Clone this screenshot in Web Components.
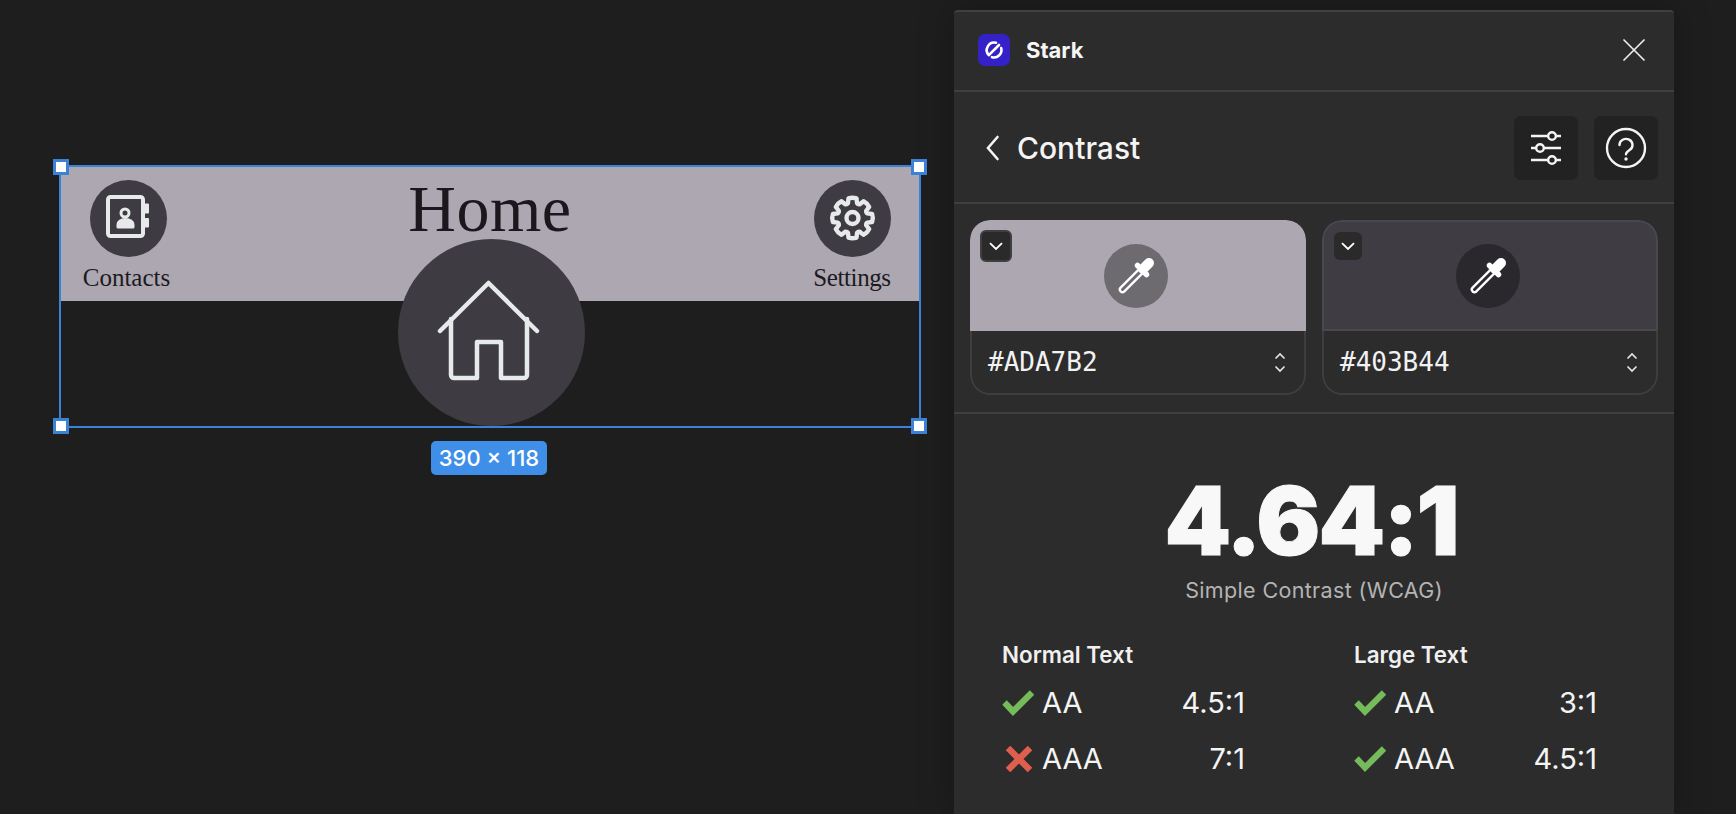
<!DOCTYPE html>
<html>
<head>
<meta charset="utf-8">
<style>
  html, body { margin: 0; height: 100%; overflow: hidden; background: #1e1e1e; }
</style>
</head>
<body>
<stark-app></stark-app>
<script>
// small helper, every element is just a template in an open shadow root
function defineEl(name, html) {
  const template = document.createElement("template");
  template.innerHTML = html;
  customElements.define(name, class extends HTMLElement {
    constructor() {
      super();
      this.attachShadow({ mode: "open" });
      this.shadowRoot.appendChild(template.content.cloneNode(true));
    }
  });
}

// 8 tooth gear outline around the centre of a 77 box
function gearPath() {
  const cx = 38.5, cy = 38, out = 20, inner = 15.5;
  let d = "";
  for (let i = 0; i < 8; i++) {
    const a = (i * Math.PI) / 4 - Math.PI / 2;
    const pts = [
      [inner, a - 0.3], [out, a - 0.2], [out, a + 0.2], [inner, a + 0.3]
    ].map(([r, t]) => [cx + r * Math.cos(t), cy + r * Math.sin(t)]);
    const next = a + Math.PI / 4;
    const v = [cx + (inner - 1) * Math.cos(a + Math.PI / 8), cy + (inner - 1) * Math.sin(a + Math.PI / 8)];
    const after = [cx + inner * Math.cos(next - 0.3), cy + inner * Math.sin(next - 0.3)];
    d += (i === 0 ? "M" : "L") + pts[0].map(n => n.toFixed(2)).join(" ");
    d += "L" + pts[1].map(n => n.toFixed(2)).join(" ");
    d += "Q" + (cx + (out + 1) * Math.cos(a)).toFixed(2) + " " + (cy + (out + 1) * Math.sin(a)).toFixed(2) + " " + pts[2].map(n => n.toFixed(2)).join(" ");
    d += "L" + pts[3].map(n => n.toFixed(2)).join(" ");
    d += "Q" + v.map(n => n.toFixed(2)).join(" ") + " " + after.map(n => n.toFixed(2)).join(" ");
  }
  return d + "Z";
}

const eyedropper = `
  <svg width="64" height="64" viewBox="0 0 64 64" fill="none" stroke-linecap="round">
    <path d="M18.5 45.5 L36 28" stroke="#fff" stroke-width="7.6"/>
    <path d="M18.5 45.5 L36 28" stroke="var(--well)" stroke-width="3"/>
    <path d="M33.5 21.5 L42.5 30.5" stroke="#fff" stroke-width="5.5"/>
    <path d="M39 25 L45 19" stroke="#fff" stroke-width="10"/>
  </svg>`;

const checkIcon = `<svg width="32" height="26" viewBox="0 0 32 26" fill="none"><path d="M2.5 12.5 L11 21.5 L30 2.5" stroke="#76bb5b" stroke-width="6.2"/></svg>`;
const crossIcon = `<svg width="32" height="26" viewBox="0 0 32 26" fill="none"><path d="M6 2 L28 24 M28 2 L6 24" stroke="#df5f4f" stroke-width="6.4"/></svg>`;

defineEl("nav-item", `
  <style>
    :host { display: flex; flex-direction: column; align-items: center; width: 90px; }
    .circle { width: 77px; height: 77px; border-radius: 50%; background: #3e3b42; }
    svg { display: block; }
    .label { font: 25px/30px "Liberation Serif", serif; color: #1c1a1e; margin-top: 6px; margin-right: var(--label-shift, 0); white-space: nowrap; }
  </style>
  <div class="circle"><slot name="icon"></slot></div>
  <div class="label"><slot></slot></div>
`);

defineEl("home-frame", `
  <style>
    :host { display: block; position: relative; width: 858px; height: 259px; outline: 2px solid #3b82d6; }
    .band { height: 134px; background: #ada7b2; display: flex; justify-content: space-between; padding: 13px 22px 0 22.5px; box-sizing: border-box; }
    .title { font: 66px/66px "Liberation Serif", serif; color: #1a181c; position: absolute; left: 0; right: 0; top: 9px; text-align: center; letter-spacing: .5px; }
    .home { position: absolute; left: 337px; top: 72px; width: 187px; height: 187px; border-radius: 50%; background: #3e3b42; }
    .handle { position: absolute; width: 10px; height: 10px; background: #fff; border: 3px solid #3b82d6; }
    .tl { left: -8px; top: -8px; } .tr { right: -8px; top: -8px; }
    .bl { left: -8px; bottom: -8px; } .br { right: -8px; bottom: -8px; }
    .size { position: absolute; left: 370px; top: 274px; width: 116px; height: 34px; border-radius: 5px; background: #3f8fe8; color: #fff; font: 500 22px/34px Inter, sans-serif; text-align: center; white-space: nowrap; }
    .contacts { --label-shift: 4px; }
    .settings { letter-spacing: -.4px; }
  </style>
  <div class="band">
    <nav-item class="contacts">
      <svg slot="icon" width="77" height="77" viewBox="0 0 77 77" fill="none" stroke="#e6eaea" stroke-linejoin="round">
        <rect x="18" y="17" width="35" height="39" rx="2.5" stroke-width="4"/>
        <path d="M54 24.5 h4 v8 h-4 z M54 39 h4 v7.5 h-4 z" fill="#e6eaea" stroke-width="2"/>
        <circle cx="35" cy="33" r="4" stroke-width="3"/>
        <path d="M28 47 v-2.5 c0-3 3-5 7.5-5 s7.5 2 7.5 5 v2.5 z" fill="#e6eaea" stroke-width="3"/>
      </svg>
      Contacts
    </nav-item>
    <nav-item class="settings">
      <svg slot="icon" width="77" height="77" viewBox="0 0 77 77" fill="none" stroke="#e6eaea" stroke-width="4.4" stroke-linejoin="round">
        <path d="${gearPath()}"/>
        <circle cx="38.5" cy="38" r="6"/>
      </svg>
      Settings
    </nav-item>
  </div>
  <div class="title">Home</div>
  <div class="home">
    <svg width="187" height="187" viewBox="0 0 187 187" fill="none" stroke="#e6eaea" stroke-width="4.5" stroke-linecap="round" stroke-linejoin="round">
      <path d="M42 92 L90.5 44 L139 92"/>
      <path d="M53 80 V136 a3 3 0 0 0 3 3 H79 V103 H103 V139 H126 a3 3 0 0 0 3-3 V80"/>
    </svg>
  </div>
  <span class="handle tl"></span><span class="handle tr"></span>
  <span class="handle bl"></span><span class="handle br"></span>
  <div class="size">390 × 118</div>
`);

defineEl("tool-button", `
  <style>
    :host { display: block; width: 64px; height: 64px; border-radius: 7px; background: #222; }
    ::slotted(svg) { display: block; }
  </style>
  <slot></slot>
`);

defineEl("color-card", `
  <style>
    :host { display: block; width: 336px; height: 175px; border-radius: 20px; overflow: hidden; position: relative; }
    .top { height: 111px; box-sizing: border-box; background: var(--swatch); display: flex; align-items: center; justify-content: center; border: 2px solid var(--edge); border-radius: 20px 20px 0 0; }
    .well { width: 64px; height: 64px; border-radius: 50%; background: var(--well); margin-right: 4px; }
    .toggle { position: absolute; left: var(--toggle-x); top: var(--toggle-y); width: var(--toggle-size); height: var(--toggle-size); box-sizing: border-box; border-radius: 6px; background: #2a2a2a; border: var(--toggle-border); display: flex; align-items: center; justify-content: center; }
    .bottom { height: 64px; box-sizing: border-box; display: flex; align-items: center; justify-content: space-between; padding: 0 18px 0 16px; border: 2px solid #3e3e3e; border-top: 0; border-radius: 0 0 20px 20px; }
    .hex { font: 26px/30px "DejaVu Sans Mono", monospace; color: #f2f2f2; }
    svg { display: block; }
  </style>
  <div class="top"><div class="well">${eyedropper}</div></div>
  <div class="toggle">
    <svg width="14" height="9" viewBox="0 0 14 9" fill="none"><path d="M1 1.2 L7 7 L13 1.2" stroke="#fff" stroke-width="1.8"/></svg>
  </div>
  <div class="bottom">
    <div class="hex"><slot></slot></div>
    <svg width="12" height="21" viewBox="0 0 12 21" fill="none" stroke="#e4e4e4" stroke-width="1.7"><path d="M1.5 6.5 L6 2 L10.5 6.5 M1.5 14.5 L6 19 L10.5 14.5"/></svg>
  </div>
`);

defineEl("grade-row", `
  <style>
    :host { display: flex; align-items: center; height: 56px; font: 400 29px/34px Inter, sans-serif; color: #f4f4f4; }
    .icon { width: 40px; height: 26px; }
    .ratio { margin-left: auto; }
  </style>
  <div class="icon"><slot name="icon"></slot></div>
  <slot></slot>
  <div class="ratio"><slot name="ratio"></slot></div>
`);

defineEl("grade-group", `
  <style>
    :host { display: block; width: 243px; }
    .head { font: 600 22.4px/28px Inter, sans-serif; color: #f0f0f0; margin-bottom: 6px; }
  </style>
  <div class="head"><slot name="head"></slot></div>
  <slot></slot>
`);

defineEl("stark-panel", `
  <style>
    :host { display: flex; flex-direction: column; width: 720px; height: 804px; background: #2c2c2c; border-top: 2px solid #404040; box-sizing: border-box; border-radius: 4px 4px 0 0; box-shadow: 0 0 36px rgba(0,0,0,.28); overflow: hidden; font-family: Inter, sans-serif; }
    .head { height: 80px; box-sizing: border-box; display: flex; align-items: center; padding: 0 28px 2px 24px; border-bottom: 2px solid #3f3f3f; flex: none; }
    .logo { width: 32px; height: 32px; border-radius: 7px; background: #3421c7; margin-right: 16px; }
    .name { font: 700 22px/28px Inter, sans-serif; color: #f6f6f6; flex: 1; }
    .tools { height: 112px; box-sizing: border-box; display: flex; align-items: center; gap: 16px; padding: 2px 16px 0 28px; border-bottom: 2px solid #3f3f3f; flex: none; }
    .page { font: 550 30px/36px Inter, sans-serif; color: #f4f4f4; flex: 1; margin-left: 1px; }
    .cards { height: 210px; box-sizing: border-box; padding: 16px 16px 0; display: flex; gap: 16px; border-bottom: 2px solid #3f3f3f; flex: none; }
    .ratio { font: 900 95px/96px Inter, sans-serif; color: #f8f8f8; text-align: center; margin-top: 59px; padding-right: 6px; letter-spacing: -2px; -webkit-text-stroke: 1px #f8f8f8; }
    .kind { font: 400 21.5px/28px Inter, sans-serif; color: #b4b4b4; text-align: center; margin-top: 7px; letter-spacing: .35px; }
    .grades { display: flex; gap: 109px; padding-left: 48px; margin-top: 37px; }
    svg { display: block; }
    .a { --swatch: #ada7b2; --edge: #ada7b2; --well: #6d6a70; --toggle-x: 10px; --toggle-y: 10px; --toggle-size: 32px; --toggle-border: 2px solid #3f3f3f; }
    .b { --swatch: #3f3c43; --edge: #4a484e; --well: #2a282d; --toggle-x: 12px; --toggle-y: 12px; --toggle-size: 28px; --toggle-border: none; }
  </style>
  <div class="head">
    <div class="logo">
      <svg width="32" height="32" viewBox="0 0 32 32" fill="none" stroke="#fff" stroke-width="2.6" stroke-linecap="round" stroke-linejoin="round">
        <path d="M18 8.8 A7.5 7.5 0 0 0 10.8 21.2 L21 11"/>
        <path d="M23.2 14 A7.5 7.5 0 0 1 14 23.2"/>
      </svg>
    </div>
    <div class="name">Stark</div>
    <svg width="24" height="24" viewBox="0 0 24 24" fill="none" stroke="#f0f0f0" stroke-width="1.6"><path d="M1.5 1.5 L22.5 22.5 M22.5 1.5 L1.5 22.5"/></svg>
  </div>
  <div class="tools">
    <svg width="18" height="28" viewBox="0 0 18 28" fill="none" stroke="#f4f4f4" stroke-width="2.6" stroke-linecap="round"><path d="M15.5 3 L6 14 L15.5 25"/></svg>
    <div class="page">Contrast</div>
    <tool-button>
      <svg width="64" height="64" viewBox="0 0 64 64" fill="none" stroke="#f4f4f4" stroke-width="2.4">
        <path d="M17 20 H47 M17 32 H47 M17 44 H47"/>
        <circle cx="38" cy="20" r="3.8" fill="#222"/>
        <circle cx="26" cy="32" r="3.8" fill="#222"/>
        <circle cx="38" cy="44" r="3.8" fill="#222"/>
      </svg>
    </tool-button>
    <tool-button>
      <svg width="64" height="64" viewBox="0 0 64 64" fill="none" stroke="#f4f4f4" stroke-width="2.4" stroke-linecap="round">
        <circle cx="32" cy="32" r="19"/>
        <path d="M25.5 29 a6.5 6 0 1 1 10 5 c-2 1.3-3.5 2.2-3.5 4.2"/>
        <circle cx="32" cy="43" r="1.7" fill="#f4f4f4" stroke="none"/>
      </svg>
    </tool-button>
  </div>
  <div class="cards">
    <color-card class="a">#ADA7B2</color-card>
    <color-card class="b">#403B44</color-card>
  </div>
  <div class="ratio">4.64:1</div>
  <div class="kind">Simple Contrast (WCAG)</div>
  <div class="grades">
    <grade-group>
      <span slot="head">Normal Text</span>
      <grade-row><span slot="icon">${checkIcon}</span>AA<span slot="ratio">4.5:1</span></grade-row>
      <grade-row><span slot="icon">${crossIcon}</span>AAA<span slot="ratio">7:1</span></grade-row>
    </grade-group>
    <grade-group>
      <span slot="head">Large Text</span>
      <grade-row><span slot="icon">${checkIcon}</span>AA<span slot="ratio">3:1</span></grade-row>
      <grade-row><span slot="icon">${checkIcon}</span>AAA<span slot="ratio">4.5:1</span></grade-row>
    </grade-group>
  </div>
`);

defineEl("stark-app", `
  <style>
    :host { display: flex; height: 814px; overflow: hidden; }
    .canvas { width: 954px; flex: none; padding: 167px 0 0 61px; box-sizing: border-box; }
    .side { padding-top: 10px; }
  </style>
  <div class="canvas"><home-frame></home-frame></div>
  <div class="side"><stark-panel></stark-panel></div>
`);
</script>
</body>
</html>
